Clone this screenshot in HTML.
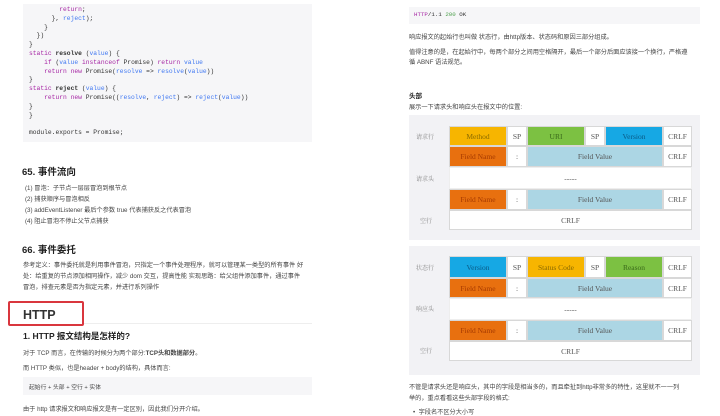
<!DOCTYPE html>
<html><head><meta charset="utf-8"><style>
*{margin:0;padding:0;box-sizing:border-box}
body{width:720px;height:416px;background:#fff;position:relative;overflow:hidden;font-family:"Liberation Sans","Noto Sans CJK SC",sans-serif;color:#333}
.a{position:absolute;white-space:nowrap}
.code{position:absolute;background:#f6f6f8}
.mono{font-family:"Liberation Mono","Noto Sans CJK SC",monospace;font-size:6.3px;line-height:8.8px;color:#333}
.k{color:#a626a4}.f{color:#4078f2}.g{color:#50a14f}
.t{font-size:6.2px;color:#444}
.h{font-weight:bold;color:#222}
.c{position:absolute;display:flex;align-items:center;justify-content:center;font-family:"Liberation Serif","Noto Serif CJK SC",serif;font-size:7.5px;color:#555;border:1px solid #d8d8d8}
.lab{position:absolute;font-family:"Noto Serif CJK SC",serif;font-size:6px;color:#888}
</style></head><body>

<div class="code" style="left:23px;top:4px;width:289px;height:138px"></div>
<div class="a mono" style="left:29px;top:6px">
<div>&nbsp;&nbsp;&nbsp;&nbsp;&nbsp;&nbsp;&nbsp;&nbsp;<span class="k">return</span>;</div>
<div>&nbsp;&nbsp;&nbsp;&nbsp;&nbsp;&nbsp;}, <span class="f">reject</span>);</div>
<div>&nbsp;&nbsp;&nbsp;&nbsp;}</div>
<div>&nbsp;&nbsp;})</div>
<div>}</div>
<div><span class="k">static</span> <b>resolve</b> (<span class="f">value</span>) {</div>
<div>&nbsp;&nbsp;&nbsp;&nbsp;<span class="k">if</span> (<span class="f">value</span> <span class="k">instanceof</span> Promise) <span class="k">return</span> <span class="f">value</span></div>
<div>&nbsp;&nbsp;&nbsp;&nbsp;<span class="k">return new</span> Promise(<span class="f">resolve</span> =&gt; <span class="f">resolve</span>(<span class="f">value</span>))</div>
<div>}</div>
<div><span class="k">static</span> <b>reject</b> (<span class="f">value</span>) {</div>
<div>&nbsp;&nbsp;&nbsp;&nbsp;<span class="k">return new</span> Promise((<span class="f">resolve</span>, <span class="f">reject</span>) =&gt; <span class="f">reject</span>(<span class="f">value</span>))</div>
<div>}</div>
<div>}</div>
<div>&nbsp;</div>
<div>module.exports = Promise;</div>
</div>

<div class="a h" style="left:22px;top:164px;font-size:9.5px">65. 事件流向</div>
<div class="a t" style="left:25px;top:183px;line-height:11px">
<div>(1) 冒泡：子节点一层层冒泡到根节点</div>
<div>(2) 捕获顺序与冒泡相反</div>
<div>(3) addEventListener 最后个参数 true 代表捕获反之代表冒泡</div>
<div>(4) 阻止冒泡不停止父节点捕获</div>
</div>

<div class="a h" style="left:22px;top:242px;font-size:9.5px">66. 事件委托</div>
<div class="a t" style="left:23px;top:260px;line-height:11px">
<div>参考定义：事件委托就是利用事件冒泡，只指定一个事件处理程序，就可以管理某一类型的所有事件 好</div>
<div>处：给重复的节点添加相同操作，减少 dom 交互，提高性能 实现思路：给父组件添加事件，通过事件</div>
<div>冒泡，排查元素是否为指定元素，并进行系列操作</div>
</div>

<div class="a" style="left:8px;top:301px;width:76px;height:25px;border:2px solid #d9363e;border-radius:2px"></div>
<div class="a h" style="left:23px;top:308px;font-size:12.5px;color:#333">HTTP</div>
<div class="a" style="left:84px;top:323px;width:228px;height:1px;background:#eee"></div>
<div class="a h" style="left:23px;top:330px;font-size:8.5px">1. HTTP 报文结构是怎样的?</div>
<div class="a t" style="left:23px;top:348px">对于 TCP 而言，在传输的时候分为两个部分:<b>TCP头和数据部分</b>。</div>
<div class="a t" style="left:23px;top:363px">而 HTTP 类似，也是header + body的结构，具体而言:</div>
<div class="code" style="left:23px;top:377px;width:289px;height:18px"></div>
<div class="a t" style="left:29px;top:382px;font-size:5.8px">起始行 + 头部 + 空行 + 实体</div>
<div class="a t" style="left:23px;top:404px">由于 http 请求报文和响应报文是有一定区别，因此我们分开介绍。</div>

<!-- right -->
<div class="code" style="left:409px;top:7px;width:291px;height:17px"></div>
<div class="a mono" style="left:414px;top:11px;font-size:5.8px"><span class="k">HTTP</span>/1.1 <span class="g">200</span> OK</div>
<div class="a t" style="left:409px;top:32px">响应报文的起始行也叫做 状态行，由http版本、状态码和原因三部分组成。</div>
<div class="a t" style="left:409px;top:47px">值得注意的是，在起始行中，每两个部分之间用空格隔开，最后一个部分后面应该接一个换行，严格遵</div>
<div class="a t" style="left:409px;top:57px">循 ABNF 语法规范。</div>
<div class="a h" style="left:409px;top:90px;font-size:6.5px">头部</div>
<div class="a t" style="left:409px;top:102px">展示一下请求头和响应头在报文中的位置:</div>

<div class="code" style="left:409px;top:115px;width:291px;height:125px;background:#f2f2f5"></div>
<div class="a" style="left:449px;top:126px;width:243px;height:104px;background:#fff;border:1px solid #ddd"></div>
<div class="lab" style="left:416px;top:132px">请求行</div>
<div class="lab" style="left:416px;top:174px">请求头</div>
<div class="lab" style="left:420px;top:216px">空行</div>
<div class="c" style="left:449px;top:126px;width:58px;height:20px;background:#f7b500;color:#8a6a00">Method</div>
<div class="c" style="left:507px;top:126px;width:20px;height:20px">SP</div>
<div class="c" style="left:527px;top:126px;width:58px;height:20px;background:#7cc142;color:#3a6a1a">URI</div>
<div class="c" style="left:585px;top:126px;width:20px;height:20px">SP</div>
<div class="c" style="left:605px;top:126px;width:58px;height:20px;background:#16a8e4;color:#0a5a86">Version</div>
<div class="c" style="left:663px;top:126px;width:29px;height:20px">CRLF</div>
<div class="c" style="left:449px;top:146px;width:58px;height:21px;background:#e8700f;color:#a63a00">Field Name</div>
<div class="c" style="left:507px;top:146px;width:20px;height:21px">:</div>
<div class="c" style="left:527px;top:146px;width:136px;height:21px;background:#acd6e4">Field Value</div>
<div class="c" style="left:663px;top:146px;width:29px;height:21px">CRLF</div>
<div class="c" style="left:449px;top:167px;width:243px;height:22px;border-color:#eee">-----</div>
<div class="c" style="left:449px;top:189px;width:58px;height:21px;background:#e8700f;color:#a63a00">Field Name</div>
<div class="c" style="left:507px;top:189px;width:20px;height:21px">:</div>
<div class="c" style="left:527px;top:189px;width:136px;height:21px;background:#acd6e4">Field Value</div>
<div class="c" style="left:663px;top:189px;width:29px;height:21px">CRLF</div>
<div class="c" style="left:449px;top:210px;width:243px;height:20px">CRLF</div>

<div class="code" style="left:409px;top:246px;width:291px;height:129px;background:#f2f2f5"></div>
<div class="a" style="left:449px;top:256px;width:243px;height:105px;background:#fff;border:1px solid #ddd"></div>
<div class="lab" style="left:416px;top:263px">状态行</div>
<div class="lab" style="left:416px;top:304px">响应头</div>
<div class="lab" style="left:420px;top:346px">空行</div>
<div class="c" style="left:449px;top:256px;width:58px;height:22px;background:#16a8e4;color:#0a5a86">Version</div>
<div class="c" style="left:507px;top:256px;width:20px;height:22px">SP</div>
<div class="c" style="left:527px;top:256px;width:58px;height:22px;background:#f7b500;color:#8a6a00">Status Code</div>
<div class="c" style="left:585px;top:256px;width:20px;height:22px">SP</div>
<div class="c" style="left:605px;top:256px;width:58px;height:22px;background:#7cc142;color:#3a6a1a">Reason</div>
<div class="c" style="left:663px;top:256px;width:29px;height:22px">CRLF</div>
<div class="c" style="left:449px;top:278px;width:58px;height:20px;background:#e8700f;color:#a63a00">Field Name</div>
<div class="c" style="left:507px;top:278px;width:20px;height:20px">:</div>
<div class="c" style="left:527px;top:278px;width:136px;height:20px;background:#acd6e4">Field Value</div>
<div class="c" style="left:663px;top:278px;width:29px;height:20px">CRLF</div>
<div class="c" style="left:449px;top:298px;width:243px;height:22px;border-color:#eee">-----</div>
<div class="c" style="left:449px;top:320px;width:58px;height:21px;background:#e8700f;color:#a63a00">Field Name</div>
<div class="c" style="left:507px;top:320px;width:20px;height:21px">:</div>
<div class="c" style="left:527px;top:320px;width:136px;height:21px;background:#acd6e4">Field Value</div>
<div class="c" style="left:663px;top:320px;width:29px;height:21px">CRLF</div>
<div class="c" style="left:449px;top:341px;width:243px;height:20px">CRLF</div>

<div class="a t" style="left:409px;top:382px">不管是请求头还是响应头，其中的字段是相当多的，而且牵扯到http非常多的特性，这里就不一一列</div>
<div class="a t" style="left:409px;top:393px">举的，重点看看这些头部字段的格式:</div>
<div class="a t" style="left:413px;top:407px">•&nbsp;&nbsp;字段名不区分大小写</div>
</body></html>
